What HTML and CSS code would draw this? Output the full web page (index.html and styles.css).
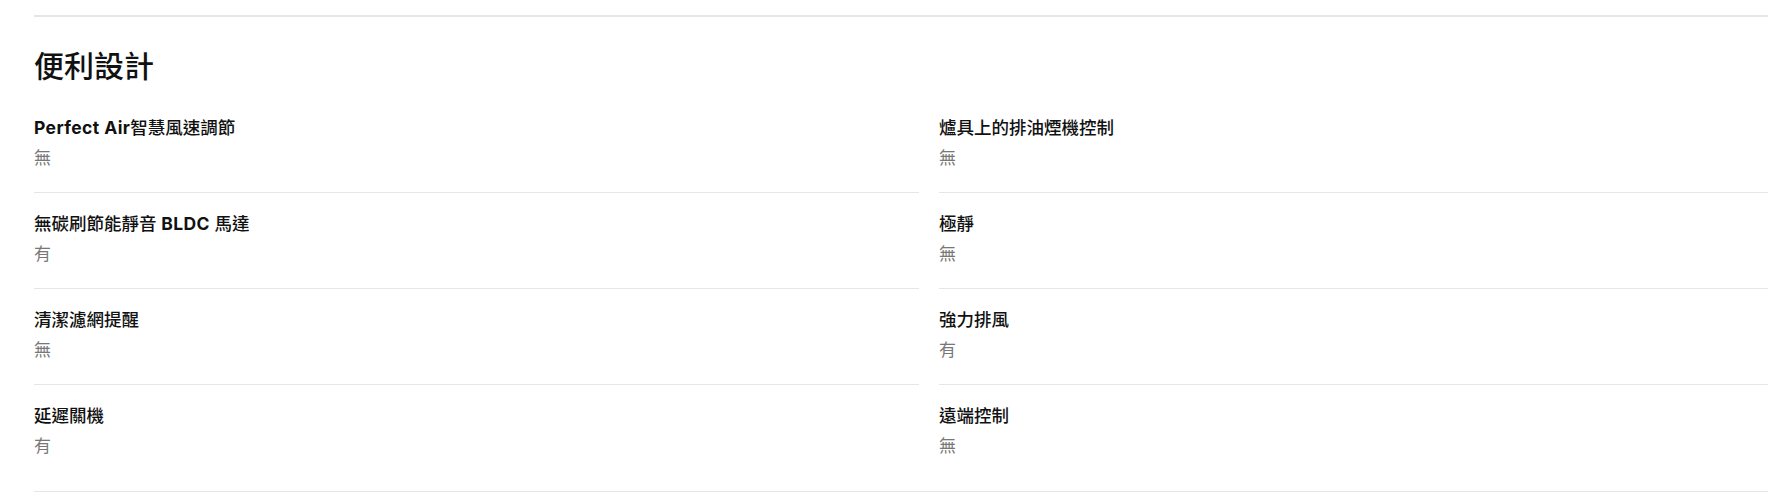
FILE: index.html
```html
<!DOCTYPE html>
<html lang="zh-Hant">
<head>
    <meta charset="UTF-8">
    <meta name="viewport" content="width=device-width, initial-scale=1.0">
    <title>便利設計</title>
    <link rel="stylesheet" href="styles.css">
</head>
<body>
    <section class="spec-section">
        <h2 class="spec-title">便利設計</h2>
        <div class="spec-grid">
            <div class="spec-item">
                <div class="spec-label"><b>Perfect Air</b>智慧風速調節</div>
                <div class="spec-value">無</div>
            </div>
            <div class="spec-item">
                <div class="spec-label">爐具上的排油煙機控制</div>
                <div class="spec-value">無</div>
            </div>
            <div class="spec-item">
                <div class="spec-label">無碳刷節能靜音 <b>BLDC</b> 馬達</div>
                <div class="spec-value">有</div>
            </div>
            <div class="spec-item">
                <div class="spec-label">極靜</div>
                <div class="spec-value">無</div>
            </div>
            <div class="spec-item">
                <div class="spec-label">清潔濾網提醒</div>
                <div class="spec-value">無</div>
            </div>
            <div class="spec-item">
                <div class="spec-label">強力排風</div>
                <div class="spec-value">有</div>
            </div>
            <div class="spec-item last">
                <div class="spec-label">延遲關機</div>
                <div class="spec-value">有</div>
            </div>
            <div class="spec-item last">
                <div class="spec-label">遠端控制</div>
                <div class="spec-value">無</div>
            </div>
        </div>
    </section>
</body>
</html>
```

FILE: styles.css
```css
html, body {
    overflow: hidden;
}
body {
    margin: 0;
    padding: 15px 0 0 34px;
    background: #fff;
    color: #111;
    font-family: Inter, "Noto Sans CJK TC", sans-serif;
}
.spec-section {
    width: 1790px;
    border-top: 2px solid #e6e6e6;
    border-bottom: 1px solid #e6e6e6;
}
.spec-title {
    font-size: 30px;
    font-weight: 500;
    line-height: 38px;
    margin: 30px 0 12px;
}
.spec-grid {
    display: grid;
    grid-template-columns: 885px 885px;
    column-gap: 20px;
}
.spec-item {
    padding: 18px 0 21px;
    border-bottom: 1px solid #e6e6e6;
}
.spec-item.last {
    border-bottom: none;
    padding-bottom: 32px;
}
.spec-label {
    font-size: 17.5px;
    font-weight: 500;
    line-height: 26px;
}
.spec-label b {
    font-weight: 700;
    letter-spacing: 0.4px;
}
.spec-value {
    font-size: 17px;
    font-weight: 400;
    line-height: 26px;
    margin-top: 4px;
    color: #777;
}
```
